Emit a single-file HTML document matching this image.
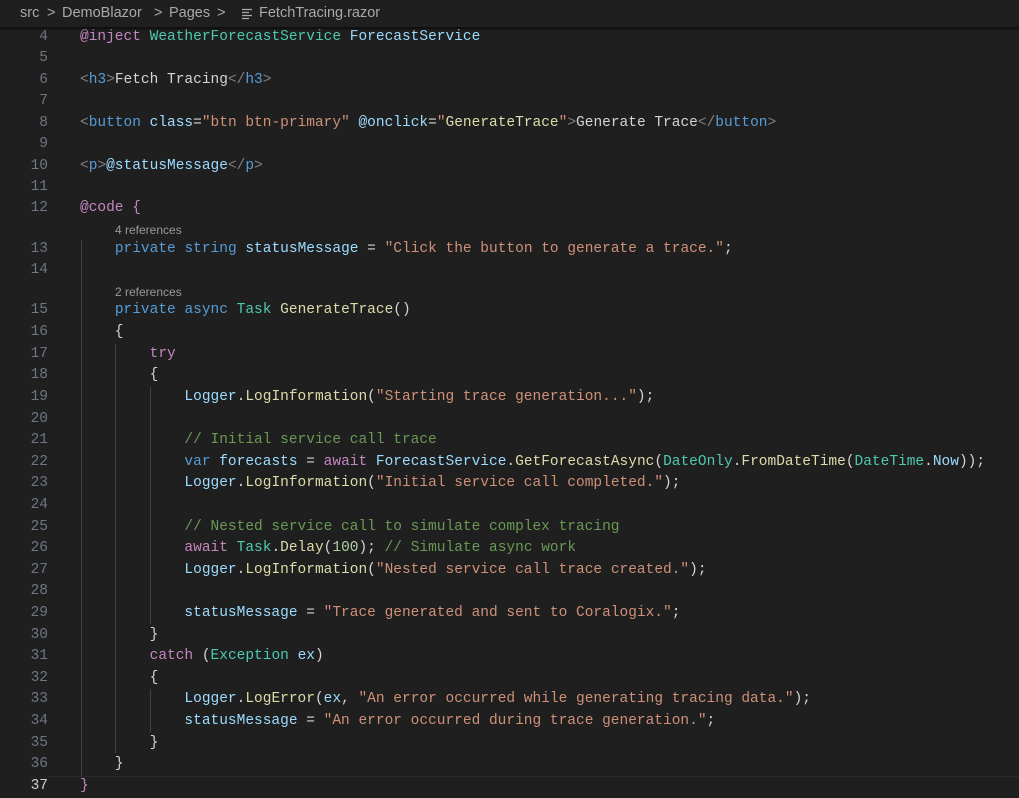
<!DOCTYPE html>
<html><head><meta charset="utf-8"><style>
html,body{margin:0;padding:0;background:#1f1f1f;width:1019px;height:797px;overflow:hidden;}
.bc{position:absolute;left:0;top:0;width:1019px;height:27px;background:#1f1f1f;box-shadow:0 2px 3px rgba(0,0,0,.6);font-family:"Liberation Sans",sans-serif;font-size:14.5px;color:#a9a9a9;z-index:2}
.bc span{position:absolute;top:5px;white-space:nowrap}
.l{position:absolute;left:0;height:21px;width:1019px;font-family:"Liberation Mono",monospace;font-size:14.5px;line-height:21px;white-space:pre;color:#d4d4d4}
.n{position:absolute;left:0;width:48px;text-align:right;color:#6e7681}
.c{position:absolute;left:80px}
.cl{position:absolute;font-family:"Liberation Sans",sans-serif;font-size:12px;color:#999;height:18px;line-height:18px}
.g{position:absolute;width:1px;background:#404040}
.k{color:#569cd6}.p{color:#c586c0}.t{color:#4ec9b0}.v{color:#9cdcfe}.f{color:#dcdcaa}.s{color:#ce9178}.cm{color:#6a9955}.nu{color:#b5cea8}.b{color:#808080}
</style></head><body>
<div class="bc"><span style="left:20px">src</span><span style="left:47px">&gt;</span><span style="left:62px">DemoBlazor</span><span style="left:154px">&gt;</span><span style="left:169px">Pages</span><span style="left:217px">&gt;</span>
<svg style="position:absolute;left:241px;top:8px" width="12" height="12" viewBox="0 0 12 12"><path d="M1 1.5h10M1 4.5h7M1 7.5h10M1 10.5h7" stroke="#a9a9a9" stroke-width="1.2"/></svg>
<span style="left:259px">FetchTracing.razor</span></div>

<div class="g" style="left:81px;top:240px;height:536px"></div>
<div class="g" style="left:115px;top:344px;height:409px"></div>
<div class="g" style="left:150px;top:387px;height:237px"></div>
<div class="g" style="left:150px;top:689px;height:43px"></div>
<div style="position:absolute;left:48px;top:776px;width:971px;height:21px;border-top:1px solid #2a2a2a"></div>

<div class="l" style="top:27px"><span class="n">4</span><span class="c"><span class="p">@inject</span> <span class="t">WeatherForecastService</span> <span class="v">ForecastService</span></span></div>
<div class="l" style="top:48px"><span class="n">5</span></div>
<div class="l" style="top:70px"><span class="n">6</span><span class="c"><span class="b">&lt;</span><span class="k">h3</span><span class="b">&gt;</span>Fetch Tracing<span class="b">&lt;/</span><span class="k">h3</span><span class="b">&gt;</span></span></div>
<div class="l" style="top:91px"><span class="n">7</span></div>
<div class="l" style="top:113px"><span class="n">8</span><span class="c"><span class="b">&lt;</span><span class="k">button</span> <span class="v">class</span>=<span class="s">"btn btn-primary"</span> <span class="v">@onclick</span>=<span class="s">"</span><span class="f">GenerateTrace</span><span class="s">"</span><span class="b">&gt;</span>Generate Trace<span class="b">&lt;/</span><span class="k">button</span><span class="b">&gt;</span></span></div>
<div class="l" style="top:134px"><span class="n">9</span></div>
<div class="l" style="top:156px"><span class="n">10</span><span class="c"><span class="b">&lt;</span><span class="k">p</span><span class="b">&gt;</span><span class="v">@statusMessage</span><span class="b">&lt;/</span><span class="k">p</span><span class="b">&gt;</span></span></div>
<div class="l" style="top:177px"><span class="n">11</span></div>
<div class="l" style="top:198px"><span class="n">12</span><span class="c"><span class="p">@code {</span></span></div>
<div class="cl" style="left:115px;top:221px">4 references</div>
<div class="l" style="top:239px"><span class="n">13</span><span class="c">    <span class="k">private</span> <span class="k">string</span> <span class="v">statusMessage</span> = <span class="s">"Click the button to generate a trace."</span>;</span></div>
<div class="l" style="top:260px"><span class="n">14</span></div>
<div class="cl" style="left:115px;top:283px">2 references</div>
<div class="l" style="top:300px"><span class="n">15</span><span class="c">    <span class="k">private</span> <span class="k">async</span> <span class="t">Task</span> <span class="f">GenerateTrace</span>()</span></div>
<div class="l" style="top:322px"><span class="n">16</span><span class="c">    {</span></div>
<div class="l" style="top:344px"><span class="n">17</span><span class="c">        <span class="p">try</span></span></div>
<div class="l" style="top:365px"><span class="n">18</span><span class="c">        {</span></div>
<div class="l" style="top:387px"><span class="n">19</span><span class="c">            <span class="v">Logger</span>.<span class="f">LogInformation</span>(<span class="s">"Starting trace generation..."</span>);</span></div>
<div class="l" style="top:409px"><span class="n">20</span></div>
<div class="l" style="top:430px"><span class="n">21</span><span class="c">            <span class="cm">// Initial service call trace</span></span></div>
<div class="l" style="top:452px"><span class="n">22</span><span class="c">            <span class="k">var</span> <span class="v">forecasts</span> = <span class="p">await</span> <span class="v">ForecastService</span>.<span class="f">GetForecastAsync</span>(<span class="t">DateOnly</span>.<span class="f">FromDateTime</span>(<span class="t">DateTime</span>.<span class="v">Now</span>));</span></div>
<div class="l" style="top:473px"><span class="n">23</span><span class="c">            <span class="v">Logger</span>.<span class="f">LogInformation</span>(<span class="s">"Initial service call completed."</span>);</span></div>
<div class="l" style="top:495px"><span class="n">24</span></div>
<div class="l" style="top:517px"><span class="n">25</span><span class="c">            <span class="cm">// Nested service call to simulate complex tracing</span></span></div>
<div class="l" style="top:538px"><span class="n">26</span><span class="c">            <span class="p">await</span> <span class="t">Task</span>.<span class="f">Delay</span>(<span class="nu">100</span>); <span class="cm">// Simulate async work</span></span></div>
<div class="l" style="top:560px"><span class="n">27</span><span class="c">            <span class="v">Logger</span>.<span class="f">LogInformation</span>(<span class="s">"Nested service call trace created."</span>);</span></div>
<div class="l" style="top:581px"><span class="n">28</span></div>
<div class="l" style="top:603px"><span class="n">29</span><span class="c">            <span class="v">statusMessage</span> = <span class="s">"Trace generated and sent to Coralogix."</span>;</span></div>
<div class="l" style="top:625px"><span class="n">30</span><span class="c">        }</span></div>
<div class="l" style="top:646px"><span class="n">31</span><span class="c">        <span class="p">catch</span> (<span class="t">Exception</span> <span class="v">ex</span>)</span></div>
<div class="l" style="top:668px"><span class="n">32</span><span class="c">        {</span></div>
<div class="l" style="top:689px"><span class="n">33</span><span class="c">            <span class="v">Logger</span>.<span class="f">LogError</span>(<span class="v">ex</span>, <span class="s">"An error occurred while generating tracing data."</span>);</span></div>
<div class="l" style="top:711px"><span class="n">34</span><span class="c">            <span class="v">statusMessage</span> = <span class="s">"An error occurred during trace generation."</span>;</span></div>
<div class="l" style="top:733px"><span class="n">35</span><span class="c">        }</span></div>
<div class="l" style="top:754px"><span class="n">36</span><span class="c">    }</span></div>
<div class="l" style="top:776px"><span class="n" style="color:#cccccc">37</span><span class="c"><span class="p">}</span></span></div>
</body></html>
